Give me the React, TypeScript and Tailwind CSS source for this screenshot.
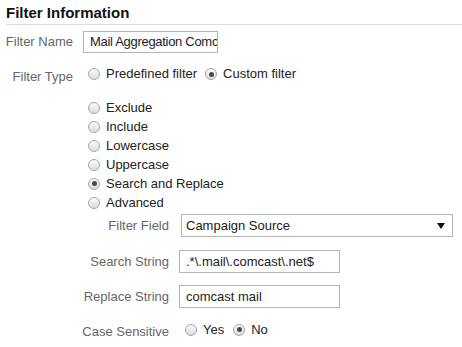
import React from 'react';

// Small grey radio button like the old Chrome default
const Radio: React.FC<{ checked?: boolean; className?: string }> = ({ checked, className }) => (
  <span
    className={`flex items-center justify-center w-[12px] h-[12px] shrink-0 rounded-full border border-[#a6a6a6] bg-gradient-to-b from-[#fbfbfb] to-[#dcdcdc] ${className ?? ''}`}
  >
    {checked && <span className="w-[5px] h-[5px] rounded-full bg-[#4a4a4a]" />}
  </span>
);

const filterKinds = [
  { label: 'Exclude', checked: false },
  { label: 'Include', checked: false },
  { label: 'Lowercase', checked: false },
  { label: 'Uppercase', checked: false },
  { label: 'Search and Replace', checked: true },
  { label: 'Advanced', checked: false },
];

const App: React.FC = () => {
  return (
    <div
      className="w-[462px] h-[347px] bg-white text-[13px] text-[#222] overflow-hidden"
      style={{ fontFamily: '"Liberation Sans", Arial, sans-serif' }}
    >
      {/* Heading */}
      <div className="h-[24px] pt-[3px] pl-[6px] text-[15px] font-bold leading-[20px] text-[#111]">
        Filter Information
      </div>
      <div className="ml-[6px] h-px bg-[#dddddd]" />

      {/* Filter Name */}
      <div className="mt-[6px] flex items-center h-[22px]">
        <span className="w-[73px] text-right text-[#666]">Filter Name</span>
        <div className="ml-[10px] w-[135px] h-[22px] border border-[#b4b4b4] pl-[6px] flex items-center overflow-hidden whitespace-nowrap tracking-[-0.3px] text-[#1b1b2b]">
          Mail Aggregation Comc
        </div>
      </div>

      {/* Filter Type */}
      <div className="mt-[11px] flex items-center h-[20px]">
        <span className="w-[73px] text-right text-[#666] mt-[5px]">Filter Type</span>
        <Radio className="ml-[15px]" />
        <span className="ml-[6px]">Predefined filter</span>
        <Radio className="ml-[8px]" checked />
        <span className="ml-[6px]">Custom filter</span>
      </div>

      {/* Filter kinds */}
      <div className="mt-[14px] flex flex-col">
        {filterKinds.map((k) => (
          <div key={k.label} className="h-[19px] flex items-center">
            <Radio className="ml-[88px]" checked={k.checked} />
            <span className="ml-[6px]">{k.label}</span>
          </div>
        ))}
      </div>

      {/* Filter Field */}
      <div className="mt-[2px] flex items-center h-[23px]">
        <span className="w-[169px] text-right text-[#666]">Filter Field</span>
        <div className="ml-[12px] w-[272px] h-[23px] border border-[#b4b4b4] pl-[4px] pr-[7px] flex items-center justify-between">
          <span>Campaign Source</span>
          <svg width="8" height="6" viewBox="0 0 8 6">
            <path d="M0 0 L8 0 L4 6 Z" fill="#111" />
          </svg>
        </div>
      </div>

      {/* Search String */}
      <div className="mt-[13px] flex items-center h-[23px]">
        <span className="w-[169px] text-right text-[#666]">Search String</span>
        <div className="ml-[10px] w-[161px] h-[23px] border border-[#b4b4b4] pl-[6px] flex items-center">
          .*\.mail\.comcast\.net$
        </div>
      </div>

      {/* Replace String */}
      <div className="mt-[12px] flex items-center h-[23px]">
        <span className="w-[169px] text-right text-[#666]">Replace String</span>
        <div className="ml-[10px] w-[161px] h-[23px] border border-[#b4b4b4] pl-[6px] flex items-center">
          comcast mail
        </div>
      </div>

      {/* Case Sensitive */}
      <div className="mt-[12px] flex items-center h-[19px]">
        <span className="w-[169px] text-right text-[#666] mt-[5px]">Case Sensitive</span>
        <Radio className="ml-[16px]" />
        <span className="ml-[6px]">Yes</span>
        <Radio className="ml-[9px]" checked />
        <span className="ml-[6px]">No</span>
      </div>
    </div>
  );
};

export default App;
